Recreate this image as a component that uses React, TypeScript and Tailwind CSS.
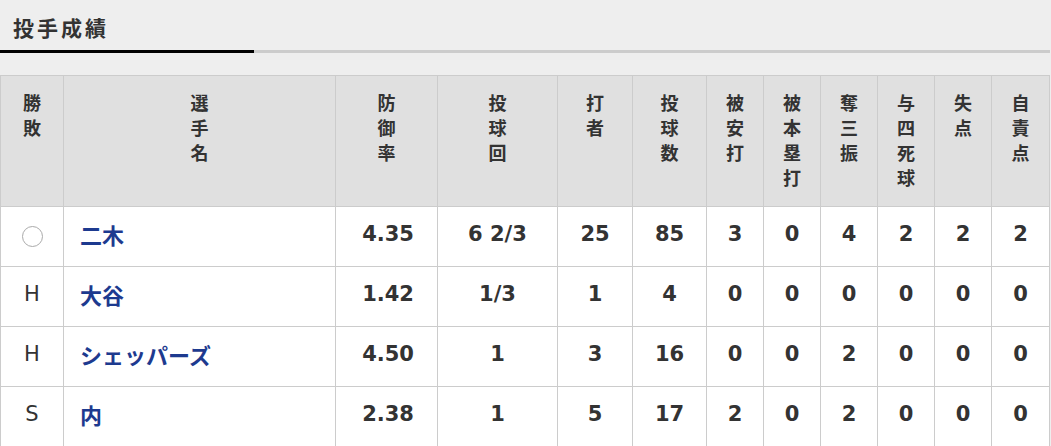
import React from 'react'

const headers: { label: string; w: string }[] = [
  { label: '勝敗', w: 'w-[63px]' },
  { label: '選手名', w: 'w-[272px]' },
  { label: '防御率', w: 'w-[102px]' },
  { label: '投球回', w: 'w-[120px]' },
  { label: '打者', w: 'w-[75px]' },
  { label: '投球数', w: 'w-[74px]' },
  { label: '被安打', w: 'w-[57px]' },
  { label: '被本塁打', w: 'w-[57px]' },
  { label: '奪三振', w: 'w-[57px]' },
  { label: '与四死球', w: 'w-[57px]' },
  { label: '失点', w: 'w-[57px]' },
  { label: '自責点', w: 'w-[58px]' },
]

type Row = { result: string; name: string; era: string; stats: string[] }

const rows: Row[] = [
  { result: 'W', name: '二木', era: '4.35', stats: ['6 2/3', '25', '85', '3', '0', '4', '2', '2', '2'] },
  { result: 'H', name: '大谷', era: '1.42', stats: ['1/3', '1', '4', '0', '0', '0', '0', '0', '0'] },
  { result: 'H', name: 'シェッパーズ', era: '4.50', stats: ['1', '3', '16', '0', '0', '2', '0', '0', '0'] },
  { result: 'S', name: '内', era: '2.38', stats: ['1', '5', '17', '2', '0', '2', '0', '0', '0'] },
]

const jp = "font-['Noto_Sans_CJK_JP',sans-serif]"
const num = "font-['DejaVu_Sans','Noto_Sans_CJK_JP',sans-serif]"

export default function App() {
  return (
    <div className="min-h-screen w-[1051px] bg-[#eeeeee] text-[#333333]">
      {/* Title */}
      <div className="pt-[12px]">
        <h2 className={`${jp} pl-[13px] text-[21px] font-bold leading-[31px] tracking-[3px] text-[#333333]`}>
          投手成績
        </h2>
        <div className="mt-[7px] flex h-[3px] w-[1050px]">
          <div className="w-[254px] bg-black" />
          <div className="flex-1 bg-[#cccccc]" />
        </div>
      </div>

      {/* Table */}
      <table className="mt-[22px] w-[1050px] table-fixed border-collapse">
        <thead>
          <tr className="h-[131px] bg-[#e0e0e0]">
            {headers.map((h) => (
              <th
                key={h.label}
                className={`${h.w} ${jp} border border-[#cccccc] pt-[14px] align-top text-[18px] font-bold leading-[25px] text-[#333333]`}
              >
                {h.label.split('').map((c, i) => (
                  <div key={i}>{c}</div>
                ))}
              </th>
            ))}
          </tr>
        </thead>
        <tbody>
          {rows.map((r) => (
            <tr key={r.name} className="h-[60px] bg-white">
              <td className="border border-[#cccccc] pb-[4px] text-center align-middle">
                {r.result === 'W' ? (
                  <span className="inline-block h-[21px] w-[21px] rounded-full border-[1.5px] border-[#aaaaaa] align-middle" />
                ) : (
                  <span className={`${num} text-[21px] text-[#333333]`}>{r.result}</span>
                )}
              </td>
              <td className={`${jp} border border-[#cccccc] pb-[4px] pl-[16px] text-left text-[22px] font-bold text-[#1d3a8f]`}>
                {r.name}
              </td>
              <td className={`${num} border border-[#cccccc] pb-[4px] pr-[23px] text-right text-[21px] font-bold`}>
                {r.era}
              </td>
              {r.stats.map((s, i) => (
                <td key={i} className={`${num} border border-[#cccccc] pb-[4px] text-center text-[21px] font-bold`}>
                  {s}
                </td>
              ))}
            </tr>
          ))}
        </tbody>
      </table>
    </div>
  )
}
